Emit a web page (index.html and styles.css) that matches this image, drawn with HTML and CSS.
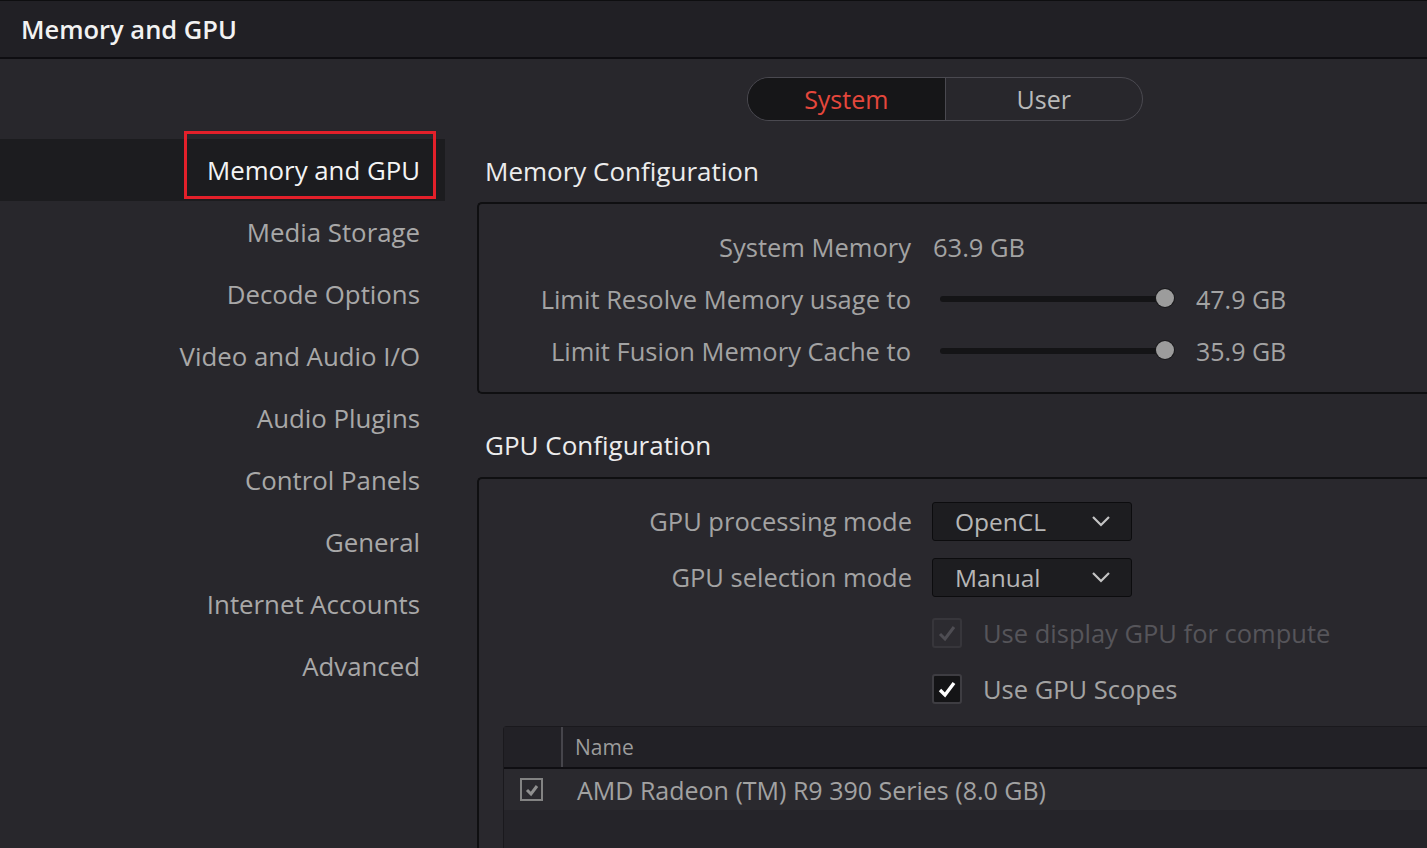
FILE: index.html
```html
<!DOCTYPE html>
<html lang="en">
<head>
    <meta charset="UTF-8">
    <meta name="viewport" content="width=device-width, initial-scale=1.0">
    <title>Memory and GPU</title>
    <link rel="stylesheet" href="styles.css">
</head>
<body>
    <div class="titlebar">Memory and GPU</div>

    <div class="main">
        <!-- Left navigation -->
        <ul class="nav">
            <li class="nav-item active"><span class="label">Memory and GPU</span></li>
            <li class="nav-item"><span class="label">Media Storage</span></li>
            <li class="nav-item"><span class="label">Decode Options</span></li>
            <li class="nav-item"><span class="label">Video and Audio I/O</span></li>
            <li class="nav-item"><span class="label">Audio Plugins</span></li>
            <li class="nav-item"><span class="label">Control Panels</span></li>
            <li class="nav-item"><span class="label">General</span></li>
            <li class="nav-item"><span class="label">Internet Accounts</span></li>
            <li class="nav-item"><span class="label">Advanced</span></li>
        </ul>

        <div class="content">
            <div class="segmented">
                <div class="seg seg-active">System</div>
                <div class="seg">User</div>
            </div>

            <h3 class="section-title first">Memory Configuration</h3>
            <div class="panel panel-memory">
                <div class="row">
                    <div class="row-label">System Memory</div>
                    <div class="row-value">63.9 GB</div>
                </div>
                <div class="row">
                    <div class="row-label">Limit Resolve Memory usage to</div>
                    <div class="slider-wrap">
                        <div class="slider"><div class="thumb"></div></div>
                        <div class="slider-value">47.9 GB</div>
                    </div>
                </div>
                <div class="row">
                    <div class="row-label">Limit Fusion Memory Cache to</div>
                    <div class="slider-wrap">
                        <div class="slider"><div class="thumb"></div></div>
                        <div class="slider-value">35.9 GB</div>
                    </div>
                </div>
            </div>

            <h3 class="section-title">GPU Configuration</h3>
            <div class="panel panel-gpu">
                <div class="row row-tall">
                    <div class="row-label">GPU processing mode</div>
                    <div class="dropdown">
                        <span>OpenCL</span>
                        <svg class="chevron" width="20" height="12" viewBox="0 0 20 12"><path d="M2 2 L10 10 L18 2" fill="none" stroke="#c4c4c4" stroke-width="2.2"/></svg>
                    </div>
                </div>
                <div class="row row-tall">
                    <div class="row-label">GPU selection mode</div>
                    <div class="dropdown">
                        <span>Manual</span>
                        <svg class="chevron" width="20" height="12" viewBox="0 0 20 12"><path d="M2 2 L10 10 L18 2" fill="none" stroke="#c4c4c4" stroke-width="2.2"/></svg>
                    </div>
                </div>
                <div class="row row-tall">
                    <div class="row-label"></div>
                    <label class="check disabled">
                        <span class="box">
                            <svg width="20" height="18" viewBox="0 0 20 18"><path d="M3 10 L8 15 L17 3" fill="none" stroke="#4e4d53" stroke-width="3"/></svg>
                        </span>
                        Use display GPU for compute
                    </label>
                </div>
                <div class="row row-tall">
                    <div class="row-label"></div>
                    <label class="check">
                        <span class="box">
                            <svg width="20" height="18" viewBox="0 0 20 18"><path d="M3 10 L8 15 L17 3" fill="none" stroke="#ffffff" stroke-width="3.4"/></svg>
                        </span>
                        Use GPU Scopes
                    </label>
                </div>

                <div class="gpu-table">
                    <div class="table-head">
                        <div class="col-check"></div>
                        <div class="col-name">Name</div>
                    </div>
                    <div class="table-row">
                        <div class="col-check">
                            <span class="mini-box">
                                <svg width="16" height="14" viewBox="0 0 16 14"><path d="M3 7 L7 11 L13 3" fill="none" stroke="#8f8f8f" stroke-width="3"/></svg>
                            </span>
                        </div>
                        <div class="col-name">AMD Radeon (TM) R9 390 Series (8.0 GB)</div>
                    </div>
                </div>
            </div>
        </div>
    </div>
</body>
</html>
```

FILE: styles.css
```css
/* Global */
html, body {
    margin: 0;
    padding: 0;
    height: 100%;
}

body {
    font-family: "Open Sans", "Noto Sans", sans-serif;
    background: #28272c;
    color: #a4a4a4;
    overflow: hidden;
}

.titlebar {
    height: 56px;
    line-height: 56px;
    padding-left: 21px;
    background: #212025;
    border-top: 1px solid #0e0e10;
    border-bottom: 2px solid #0e0d11;
    color: #f2f2f2;
    font-size: 25.5px;
    font-weight: 600;
}

.main {
    display: flex;
}

/* Sidebar */
.nav {
    list-style: none;
    margin: 0;
    padding: 80px 0 0 0;
    width: 445px;
    flex-shrink: 0;
}

.nav-item {
    height: 62px;
    display: flex;
    align-items: center;
    justify-content: flex-end;
    padding-right: 25px;
    font-size: 25.8px;
    color: #a8a8a8;
}

.nav-item .label {
    position: relative;
    line-height: 36px;
}

.nav-item.active {
    background: #1c1c1f;
    color: #f4f4f4;
}

.nav-item.active .label::after {
    content: "";
    position: absolute;
    left: -23px;
    right: -16px;
    top: -21px;
    bottom: -11px;
    border: 3px solid #e3202a;
}

/* Content */
.content {
    flex: 1;
    padding-left: 32px;
    padding-top: 18px;
    min-width: 0;
}

.segmented {
    margin-left: 270px;
    width: 394px;
    height: 42px;
    display: flex;
    border: 1px solid #4a4950;
    border-radius: 22px;
    overflow: hidden;
}

.seg {
    flex: 1;
    text-align: center;
    line-height: 42px;
    font-size: 25px;
    color: #b9b9b9;
}

.seg-active {
    background: #161618;
    color: #e5473c;
    border-right: 1px solid #4a4950;
}

.section-title {
    margin: 33px 0 14px 8px;
    font-size: 26px;
    font-weight: 400;
    line-height: 36px;
    color: #ececec;
}

.section-title.first {
    margin-top: 32px;
    margin-bottom: 13px;
}

.panel {
    border: 2px solid #0f0f11;
    border-right: none;
    border-radius: 5px 0 0 5px;
    background: #29282d;
}

.panel-memory {
    padding: 17px 0 15px 0;
}

.panel-gpu {
    padding: 14px 0 0 24px;
    height: 400px;
    border-bottom: none;
}

.row {
    display: flex;
    align-items: center;
    height: 52px;
    font-size: 25.5px;
}

.row-tall {
    height: 56px;
}

.row-label {
    width: 432px;
    flex-shrink: 0;
    text-align: right;
    margin-right: 22px;
    color: #a3a3a3;
}

.panel-gpu .row-label {
    width: 409px;
    margin-right: 20px;
}

.row-value {
    color: #a3a3a3;
}

/* Sliders */
.slider-wrap {
    display: flex;
    align-items: center;
    margin-left: 7px;
}

.slider {
    position: relative;
    width: 234px;
    height: 6px;
    border-radius: 3px;
    background: #141416;
    margin-right: 22px;
}

.slider .thumb {
    position: absolute;
    right: 0;
    top: -7px;
    width: 18px;
    height: 18px;
    border-radius: 50%;
    background: #9c9c9c;
    box-shadow: 0 0 0 1px #1a1a1c;
}

.slider-value {
    color: #a3a3a3;
    font-size: 25px;
}

/* Dropdowns */
.dropdown {
    width: 200px;
    height: 39px;
    border: 1px solid #0c0c0e;
    border-radius: 3px;
    background: #1d1d20;
    display: flex;
    align-items: center;
    justify-content: space-between;
    padding: 0 20px 0 22px;
    box-sizing: border-box;
    color: #b6b6b6;
    font-size: 24.5px;
}

/* Checkboxes */
.check {
    display: flex;
    align-items: center;
    gap: 21px;
    color: #a3a3a3;
}

.check .box {
    width: 26px;
    height: 26px;
    border: 2px solid #3e3d42;
    border-radius: 3px;
    background: #141416;
    display: flex;
    align-items: center;
    justify-content: center;
}

.check.disabled {
    color: #56555a;
}

.check.disabled .box {
    background: #2c2b30;
    border-color: #37363b;
}

/* GPU table */
.gpu-table {
    margin-top: 9px;
    height: 300px;
    border: 1px solid #1a191d;
    border-right: none;
    border-radius: 4px 0 0 0;
    background: #252429;
}

.table-head {
    display: flex;
    height: 40px;
    background: #222126;
    border-bottom: 2px solid #0f0e12;
    font-size: 21px;
}

.table-head .col-check {
    width: 57px;
    border-right: 2px solid #46454b;
}

.table-head .col-name {
    line-height: 40px;
    padding-left: 12px;
    color: #9c9c9c;
}

.table-row {
    display: flex;
    align-items: center;
    height: 41px;
    background: #2a292e;
    font-size: 25px;
}

.table-row .col-check {
    width: 59px;
    display: flex;
    justify-content: center;
    padding-right: 4px;
    box-sizing: border-box;
}

.mini-box {
    width: 19px;
    height: 19px;
    border: 2px solid #838383;
    display: flex;
    align-items: center;
    justify-content: center;
}

.table-row .col-name {
    padding-left: 14px;
    color: #a2a2a2;
}
```
